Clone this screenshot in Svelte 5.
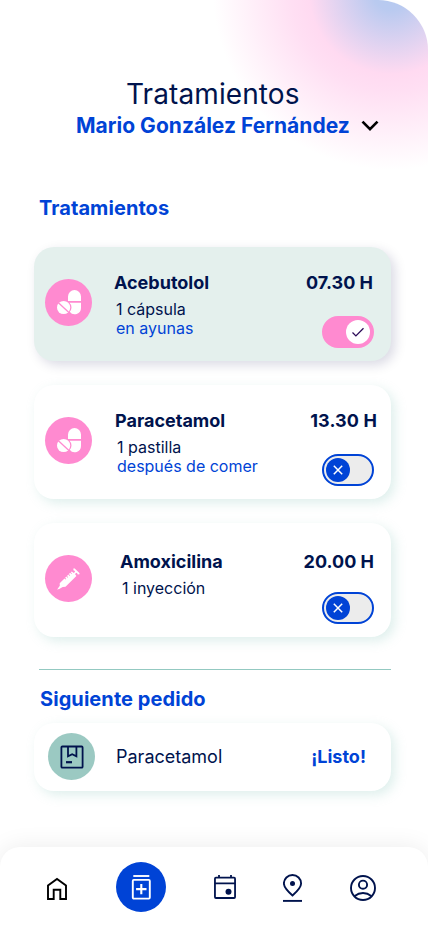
<script>
  const treatments = [
    { id: 'first', name: 'Acebutolol', dose: '1 cápsula', note: 'en ayunas', time: '07.30 H', icon: 'pill', on: true },
    { id: 'second', name: 'Paracetamol', dose: '1 pastilla', note: 'después de comer', time: '13.30 H', icon: 'pill', on: false },
    { id: 'third', name: 'Amoxicilina', dose: '1 inyección', note: '', time: '20.00 H', icon: 'syringe', on: false }
  ];
</script>

<div class="screen">
  <header>
    <h1>Tratamientos</h1>
    <div class="patient">
      <span>Mario González Fernández</span>
      <svg width="18" height="12" viewBox="0 0 18 12" fill="none" stroke="#000" stroke-width="2.7"><path d="M1.5 1.6 9 9.1l7.5-7.5" /></svg>
    </div>
  </header>

  <main>
    <h2>Tratamientos</h2>
    <div class="list">
      {#each treatments as t}
        <article class="card {t.id}" class:active={t.on}>
          <div class="badge">
            {#if t.icon === 'pill'}
              <svg width="47" height="47" viewBox="0 0 47 47">
                <path fill="#fff" d="M23 22v-4.5a6.5 6.5 0 0 1 13 0V22zM24.5 23.8H36V29a6.3 6.3 0 0 1-11.3 3.8q1.8-2 1.8-4.3 0-2.8-2-4.7z" />
                <circle cx="18.6" cy="28.5" r="6.6" fill="#fff" />
                <path d="m13.4 23.7 10.5 9.8" stroke="#ff8ad0" stroke-width="1.3" />
              </svg>
            {:else}
              <svg width="47" height="47" viewBox="0 0 47 47" fill="#fff">
                <path d="m12 34.7 2.8-4-.1-2.5 4.8-4.8 1.2 1.2.6-.6-1.2-1.3 1.3-1.2 1.2 1.3.6-.6-1.2-1.3 1.3-1.3 1.2 1.3.6-.6-1.2-1.3 1.3-1.2 1.2 1.2.6-.6-1.2-1.2 1-.8 2 1.6 1.3-1.3-.9-1.2-.9-.2.3-2 1.1.2 4.7 4.6.2 1.2-1.9.2-.3-1-1.1-.8-1.3 1.2 1.4 2.2-10.9 10.7-2.8.1-3.5 2.2-1.2.2z" />
              </svg>
            {/if}
          </div>
          <div class="info">
            <strong>{t.name}</strong>
            <p>{t.dose}</p>
            {#if t.note}<p class="note">{t.note}</p>{/if}
          </div>
          <div class="side">
            <strong>{t.time}</strong>
            <div class="toggle" class:on={t.on}>
              <div class="knob">
                {#if t.on}
                  <svg width="24" height="24" viewBox="0 0 24 24" fill="none" stroke="#2b0a57" stroke-width="1.3"><path d="m6.5 12.5 3.4 3.4 7.6-7.6" /></svg>
                {:else}
                  <svg width="24" height="24" viewBox="0 0 24 24" fill="none" stroke="#fff" stroke-width="1.5"><path d="m7.8 7.8 8.4 8.4m0-8.4-8.4 8.4" /></svg>
                {/if}
              </div>
            </div>
          </div>
        </article>
      {/each}
    </div>

    <section class="order">
      <h2>Siguiente pedido</h2>
      <article class="card order-card">
        <div class="badge green">
          <svg width="47" height="47" viewBox="0 0 47 47" fill="none" stroke="#00134d" stroke-width="1.8">
            <rect x="13.4" y="13.5" width="21.2" height="21.2" rx="1" />
            <path d="M20 13.5v9.8l4.2-2.1 4.2 2.1v-9.8" />
            <path d="M18 29.2h6" stroke-width="2.2" />
          </svg>
        </div>
        <span class="product">Paracetamol</span>
        <strong class="ready">¡Listo!</strong>
      </article>
    </section>
  </main>

  <nav>
    <div class="home">
      <svg width="22" height="24" viewBox="0 0 22 24" fill="none" stroke="#000" stroke-width="1.9"><path d="M2 22V8.5L11 2l9 6.5V22h-5.7v-9.2H7.7V22z" /></svg>
    </div>
    <div class="current">
      <svg width="20" height="26" viewBox="0 0 20 26" fill="none" stroke="#fff" stroke-width="1.9">
        <path d="M2.3 2h16" />
        <rect x="1.8" y="5.9" width="17" height="18.7" rx="1" />
        <path d="M10.3 9.9v10.4M5.1 15.1h10.4" stroke-width="2.1" />
      </svg>
    </div>
    <div class="calendar">
      <svg width="22" height="24" viewBox="0 0 22 24" fill="none" stroke="#00134d" stroke-width="1.8">
        <rect x=".95" y="2.7" width="20.1" height="20.3" rx="1" />
        <path d="M.8 8.4h20.4M5 0v2.4M17 0v2.4" />
        <circle cx="14.5" cy="16.8" r="3" fill="#00134d" stroke="none" />
      </svg>
    </div>
    <div class="pin">
      <svg width="20" height="28" viewBox="0 0 20 28" fill="none" stroke="#00134d" stroke-width="1.9">
        <path d="M9.5 21.5C4 16.7.9 13.4.9 9.5a8.6 8.5 0 0 1 17.2 0C18.1 13.4 15 16.7 9.5 21.5z" />
        <circle cx="9.5" cy="9.5" r="2.5" fill="#00134d" stroke="none" />
        <path d="M0 26.9h19" />
      </svg>
    </div>
    <div class="profile">
      <svg width="26" height="26" viewBox="0 0 26 26" fill="none" stroke="#00134d" stroke-width="1.9">
        <circle cx="13" cy="13" r="12" />
        <circle cx="13" cy="9.7" r="4.1" />
        <path d="M4.3 21.2q8.7-6.4 17.4 0" />
      </svg>
    </div>
  </nav>
</div>

<style>
  :global(body) { background: #fff; }
  .screen {
    box-sizing: border-box;
    width: 428px;
    height: 926px;
    display: flex;
    flex-direction: column;
    overflow: hidden;
    border-top-right-radius: 50px;
    font-family: Inter, "Liberation Sans", sans-serif;
    color: #00134d;
    background: radial-gradient(circle at 391px -8px, #b5caf0 0, #b9caf0 18px, #ffdaf1 82px, #ffdff3 100px, rgba(255, 255, 255, 0) 178px) #fff;
  }
  h1, h2, p { margin: 0; white-space: nowrap; }
  header { height: 138px; box-sizing: border-box; padding-top: 76px; }
  h1 { margin-left: 126px; font-size: 28px; line-height: 36px; font-weight: 400; letter-spacing: 0.1px; }
  .patient { display: flex; align-items: center; gap: 11px; margin-left: 76px; height: 27px; white-space: nowrap; color: #0043d6; font-size: 21px; font-weight: 700; letter-spacing: 0.02px; }
  main { flex: 1; padding: 57px 37px 0 34px; }
  h2 { margin-left: 5px; font-size: 20px; line-height: 26px; font-weight: 700; color: #0043d6; letter-spacing: 0.07px; }
  .list { display: flex; flex-direction: column; gap: 24px; margin-top: 26px; }
  .card {
    box-sizing: border-box;
    height: 114px;
    display: flex;
    padding-left: 11px;
    border-radius: 20px;
    background: #fff;
    box-shadow: 4px 4px 12px rgba(147, 201, 193, 0.3);
  }
  .card.active { background: #e4f0ed; box-shadow: 4px 4px 12px rgba(0, 0, 77, 0.15); }
  .badge { flex: none; width: 47px; height: 47px; margin-top: 32px; border-radius: 50%; background: #ff8ad0; }
  .badge svg { display: block; }
  .info { margin-left: 22px; padding-top: 25px; font-size: 16px; line-height: 19px; }
  .info strong, .side strong { display: block; font-size: 18px; line-height: 22px; font-weight: 700; white-space: nowrap; }
  .info p { margin-left: 2px; }
  .info strong + p { margin-top: 6px; }
  .note { color: #0043d6; }
  .side { margin-left: auto; padding: 25px 17px 0 0; display: flex; flex-direction: column; align-items: flex-end; }
  .toggle { box-sizing: border-box; width: 52px; height: 32px; margin-top: 22px; padding: 2px; border: 2px solid #0043d6; border-radius: 16px; background: #ececec; display: flex; }
  .toggle.on { background: #ff8ad0; border-color: #ff8ad0; justify-content: flex-end; }
  .knob { width: 24px; height: 24px; border-radius: 50%; background: #0043d6; }
  .on .knob { background: #fff; }
  .knob svg { display: block; }
  .second .info { margin-left: 23px; }
  .second .side strong { margin-right: -3px; letter-spacing: 0.1px; }
  .third .info { margin-left: 28px; padding-top: 28px; }
  .third .side { padding-top: 28px; }
  .third .toggle { margin-top: 19px; }
  .first .side strong { margin-right: 1px; }
  .order { margin-top: 32px; }
  .order::before { content: ""; display: block; height: 1px; margin-left: 5px; background: #93c9c1; }
  .order h2 { margin: 16px 0 11px 6px; }
  .order-card { height: 68px; align-items: center; padding: 0 25px 0 14px; }
  .order-card .badge { margin-top: -1px; }
  .green { background: #9bc9c2; }
  .product { margin: 0 0 2px 21px; font-size: 18px; }
  .ready { margin: 0 0 2px auto; font-size: 18px; font-weight: 700; color: #0043d6; }
  nav {
    flex: none;
    box-sizing: border-box;
    height: 79px;
    display: flex;
    align-items: flex-start;
    padding: 15px 0 0 46px;
    border-radius: 20px 20px 0 0;
    background: #fff;
    box-shadow: 0 0 24px rgba(0, 0, 0, 0.08);
  }
  nav svg { display: block; }
  .home { margin-top: 15px; }
  .current { width: 50px; height: 50px; margin-left: 48px; border-radius: 50%; background: #0043d6; display: flex; align-items: center; justify-content: center; }
  .calendar { margin: 13px 0 0 48px; }
  .pin { margin: 12px 0 0 47px; }
  .profile { margin: 13px 0 0 47px; }
</style>
